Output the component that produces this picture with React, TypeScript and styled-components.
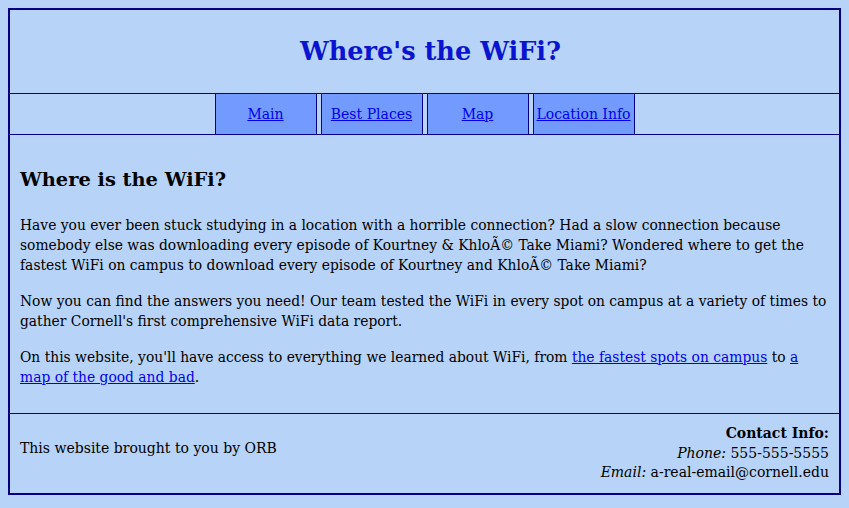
import React from "react";
import styled, { createGlobalStyle } from "styled-components";

const Global = createGlobalStyle`
  html, body { background: #b8d3f8; }
  body {
    margin: 8px;
    font-family: "DejaVu Serif", "Liberation Serif", serif;
    font-size: 14px;
    color: #000;
  }
  a { color: #0000ee; }
`;

const Page = styled.div`
  border: 2px solid #000080;
  background: #b8d3f8;
`;

const Header = styled.header`
  height: 83px;
  display: flex;
  align-items: center;
  justify-content: center;
  padding-left: 12px;
`;

const Title = styled.h1`
  margin: 0 0 2px;
  font-size: 25.6px;
  font-weight: bold;
  color: #0a14d0;
`;

const Nav = styled.nav`
  border-top: 1px solid #000080;
  border-bottom: 1px solid #000080;
  display: flex;
  justify-content: center;
  gap: 4px;
`;

const NavItem = styled.a`
  box-sizing: border-box;
  width: 102px;
  height: 40px;
  display: flex;
  align-items: center;
  justify-content: center;
  background: #739bff;
  border-left: 1px solid #000080;
  border-right: 1px solid #000080;
  color: #0000ee;
  text-decoration: underline;
  white-space: nowrap;
`;

const Main = styled.main`
  padding: 10px;
`;

const Heading = styled.h2`
  margin: 20px 0;
  font-size: 19.4px;
  line-height: 30px;
`;

const Para = styled.p`
  margin: 16px 0;
  font-size: 13.85px;
  line-height: 20px;
`;

const Footer = styled.footer`
  display: flex;
`;

const FooterHalf = styled.div<{ $right?: boolean }>`
  flex: 1;
  border-top: 1px solid #000080;
  padding: ${(p) => (p.$right ? "10px 10px 10px" : "25px 10px 0")};
  text-align: ${(p) => (p.$right ? "right" : "left")};
  line-height: 19.5px;
`;

const Label = styled.em``;

export default function App() {
  return (
    <>
      <Global />
      <Page>
        <Header>
          <Title>Where's the WiFi?</Title>
        </Header>
        <Nav>
          <NavItem href="#">Main</NavItem>
          <NavItem href="#">Best Places</NavItem>
          <NavItem href="#">Map</NavItem>
          <NavItem href="#">Location Info</NavItem>
        </Nav>
        <Main>
          <Heading>Where is the WiFi?</Heading>
          <Para>
            Have you ever been stuck studying in a location with a horrible connection? Had a slow
            connection because somebody else was downloading every episode of Kourtney &amp; KhloÃ©
            Take Miami? Wondered where to get the fastest WiFi on campus to download every episode
            of Kourtney and KhloÃ© Take Miami?
          </Para>
          <Para>
            Now you can find the answers you need! Our team tested the WiFi in every spot on campus
            at a variety of times to gather Cornell's first comprehensive WiFi data report.
          </Para>
          <Para>
            On this website, you'll have access to everything we learned about WiFi, from{" "}
            <a href="#">the fastest spots on campus</a> to <a href="#">a map of the good and bad</a>.
          </Para>
        </Main>
        <Footer>
          <FooterHalf>This website brought to you by ORB</FooterHalf>
          <FooterHalf $right>
            <strong>Contact Info:</strong>
            <br />
            <Label>Phone:</Label> 555-555-5555
            <br />
            <Label>Email:</Label> a-real-email@cornell.edu
          </FooterHalf>
        </Footer>
      </Page>
    </>
  );
}
